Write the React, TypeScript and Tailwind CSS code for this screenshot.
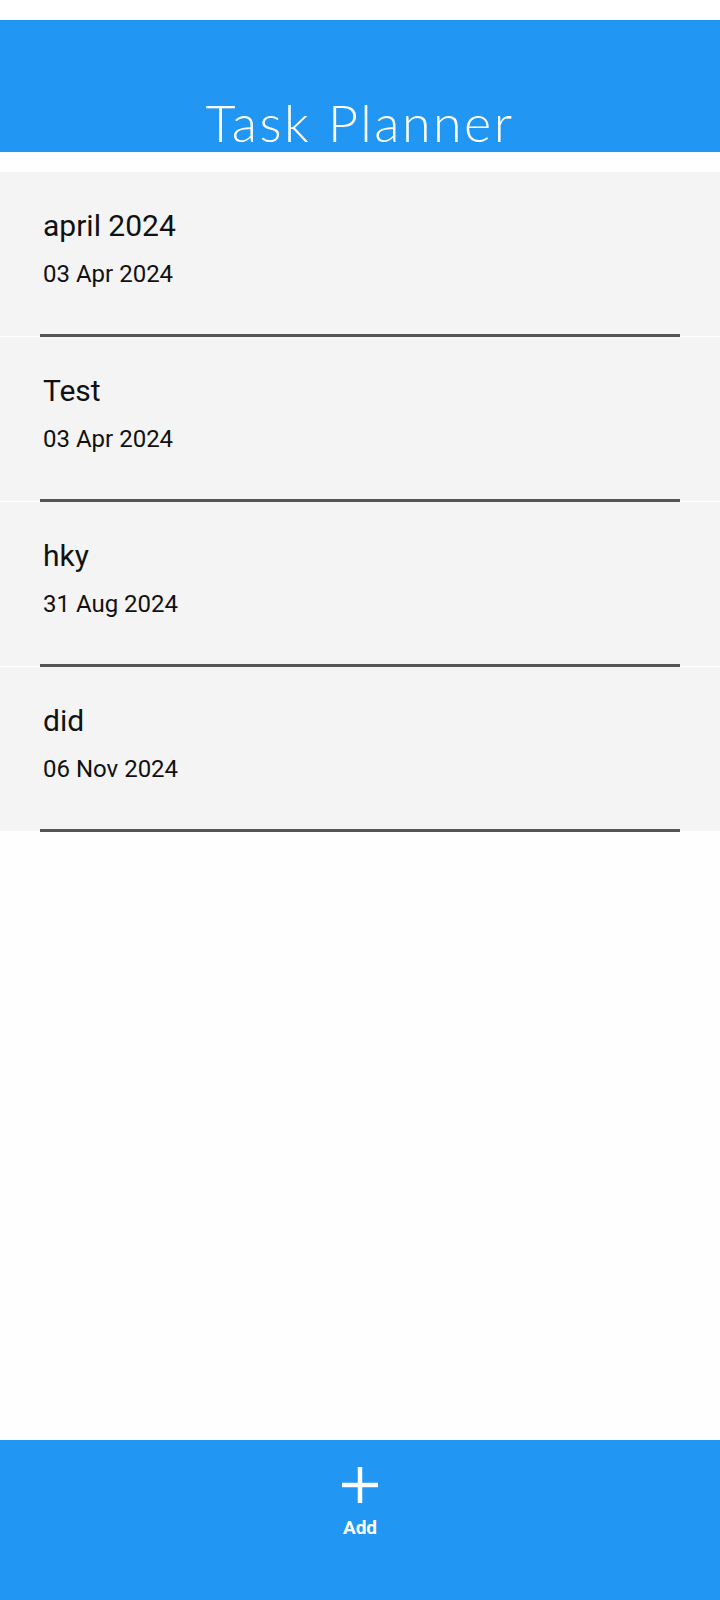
type Task = {
  title: string;
  date: string;
};

const tasks: Task[] = [
  { title: "april 2024", date: "03 Apr 2024" },
  { title: "Test", date: "03 Apr 2024" },
  { title: "hky", date: "31 Aug 2024" },
  { title: "did", date: "06 Nov 2024" },
];

const TaskRow = ({ task }: { task: Task }) => {
  return (
    <div className="bg-[#f4f4f4]">
      <div className="h-[162px] pl-[43px] pt-[39px]">
        <div className="text-[30px] leading-none text-[#111111]">{task.title}</div>
        <div className="mt-[21px] text-[24px] leading-none text-[#111111]">{task.date}</div>
      </div>
      <div className="h-[3px] border-b border-white px-10">
        <div className="h-[3px] bg-[#555555]"></div>
      </div>
    </div>
  );
};

export default function App() {
  return (
    <div className="relative min-h-[1600px] bg-[#fefefe] font-['Roboto',sans-serif]">
      <div className="h-5 bg-white"></div>
      <header className="flex h-[132px] items-end justify-center bg-[#2196f3] pb-[4px]">
        <h1 className="font-['Lato',sans-serif] text-[52px] font-light leading-none tracking-[2.5px] text-white">
          Task Planner
        </h1>
      </header>

      <div className="mt-5">
        {tasks.map((task, i) => (
          <TaskRow key={i} task={task} />
        ))}
      </div>

      {/* bottom action bar */}
      <div className="absolute bottom-0 left-0 right-0 flex h-[160px] flex-col items-center bg-[#2196f3] pt-[27px]">
        <svg width="36" height="36" viewBox="0 0 36 36" fill="white">
          <rect x="15.75" y="0" width="4.5" height="36" />
          <rect x="0" y="15.75" width="36" height="4.5" />
        </svg>
        <span className="mt-[15px] text-[19px] font-bold leading-none text-white">Add</span>
      </div>
    </div>
  );
}
